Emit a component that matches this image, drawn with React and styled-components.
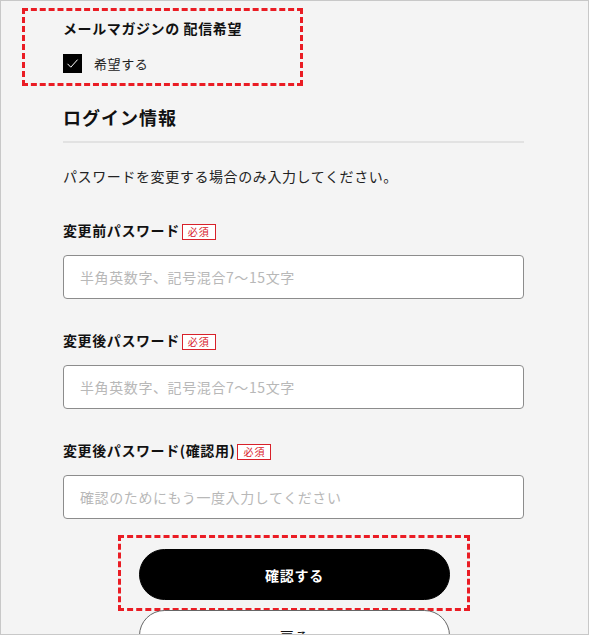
import styled, { createGlobalStyle } from "styled-components";

const GlobalStyle = createGlobalStyle`
  html, body {
    margin: 0;
    padding: 0;
    background: #ffffff;
  }
  body {
    font-family: "Noto Sans CJK JP", "Noto Sans", sans-serif;
    color: #111;
  }
`;

const Frame = styled.div`
  box-sizing: border-box;
  width: 589px;
  height: 635px;
  border: 1px solid #c8c8c8;
  border-bottom-width: 1px;
  background: #f4f4f4;
  overflow: hidden;
`;

const Highlight = styled.div`
  box-sizing: border-box;
  border: 3px dashed #ea1c24;
`;

const MailBox = styled(Highlight)`
  margin: 7px 0 0 21px;
  width: 281px;
  height: 78px;
  padding: 7px 0 0 38px;
`;

const Title = styled.div`
  font-size: 14px;
  line-height: 20px;
  font-weight: 700;
  letter-spacing: 0.6px;
`;

const CheckRow = styled.label`
  display: flex;
  align-items: center;
  gap: 12px;
  margin-top: 16px;
  font-size: 13px;
  letter-spacing: 0.6px;
  line-height: 19px;
  color: #222;
`;

const CheckBox = styled.span`
  display: flex;
  align-items: center;
  justify-content: center;
  width: 19px;
  height: 19px;
  background: #000;
`;

const Main = styled.div`
  padding: 0 64px 0 62px;
`;

const Heading = styled.h2`
  margin: 18px 0 0;
  font-size: 18px;
  line-height: 26px;
  font-weight: 700;
  letter-spacing: 1px;
`;

const Divider = styled.hr`
  margin: 11px 0 0;
  border: 0;
  height: 2px;
  background: #e2e2e2;
`;

const Note = styled.p`
  margin: 23px 0 0;
  font-size: 14px;
  line-height: 20px;
  letter-spacing: 0.6px;
  color: #222;
`;

const Field = styled.div`
  margin-top: ${(p) => p.gap}px;
`;

const Label = styled.div`
  display: flex;
  align-items: center;
  gap: 2px;
  font-size: 14px;
  line-height: 20px;
  font-weight: 700;
  letter-spacing: 0.6px;
`;

const Badge = styled.span`
  box-sizing: border-box;
  display: inline-flex;
  align-items: center;
  justify-content: center;
  width: 34px;
  height: 16px;
  margin-top: 3px;
  border: 1px solid #d8212a;
  background: #fff;
  color: #d8212a;
  font-size: 10px;
  font-weight: 400;
  letter-spacing: 1px;
`;

const Input = styled.input`
  box-sizing: border-box;
  display: block;
  width: 100%;
  height: 44px;
  margin-top: 15px;
  padding: 0 16px;
  border: 1px solid #8c8c8c;
  border-radius: 4px;
  background: #fff;
  font-family: inherit;
  font-size: 14px;
  letter-spacing: 0.6px;
  outline: none;

  &::placeholder {
    color: #b8b8b8;
  }
`;

const Actions = styled.div`
  display: flex;
  flex-direction: column;
  align-items: flex-start;
  margin-top: 16px;
  padding-left: 55px;
`;

const SubmitBox = styled(Highlight)`
  width: 352px;
  padding: 11px 0 8px 18px;
`;

const PillButton = styled.button`
  box-sizing: border-box;
  display: flex;
  align-items: center;
  justify-content: center;
  width: 311px;
  height: 51px;
  padding: 0;
  border-radius: 26px;
  font-family: inherit;
  font-size: 14px;
  line-height: 20px;
  letter-spacing: 0.8px;
  cursor: pointer;
  border: 1px solid ${(p) => (p.primary ? "#000" : "#666")};
  background: ${(p) => (p.primary ? "#000" : "#fff")};
  color: ${(p) => (p.primary ? "#fff" : "#111")};
  font-weight: ${(p) => (p.primary ? 700 : 400)};
`;

const BackButton = styled(PillButton)`
  margin: -1px 0 0 21px;
`;

const fields = [
  { label: "変更前パスワード", placeholder: "半角英数字、記号混合7〜15文字", gap: 34 },
  { label: "変更後パスワード", placeholder: "半角英数字、記号混合7〜15文字", gap: 31 },
  { label: "変更後パスワード(確認用)", placeholder: "確認のためにもう一度入力してください", gap: 31 },
];

export default function App() {
  return (
    <>
      <GlobalStyle />
      <Frame>
        <MailBox>
          <Title>メールマガジンの 配信希望</Title>
          <CheckRow>
            <CheckBox>
              <svg width="13" height="11" viewBox="0 0 13 11">
                <path d="M1.5 5.8 L4.8 9.2 L11.6 1.6" fill="none" stroke="#fff" strokeWidth="1" />
              </svg>
            </CheckBox>
            希望する
          </CheckRow>
        </MailBox>
        <Main>
          <Heading>ログイン情報</Heading>
          <Divider />
          <Note>パスワードを変更する場合のみ入力してください。</Note>
          {fields.map((f) => (
            <Field key={f.label} gap={f.gap}>
              <Label>
                {f.label}
                <Badge>必須</Badge>
              </Label>
              <Input type="password" placeholder={f.placeholder} />
            </Field>
          ))}
          <Actions>
            <SubmitBox>
              <PillButton primary>確認する</PillButton>
            </SubmitBox>
            <BackButton>戻る</BackButton>
          </Actions>
        </Main>
      </Frame>
    </>
  );
}
